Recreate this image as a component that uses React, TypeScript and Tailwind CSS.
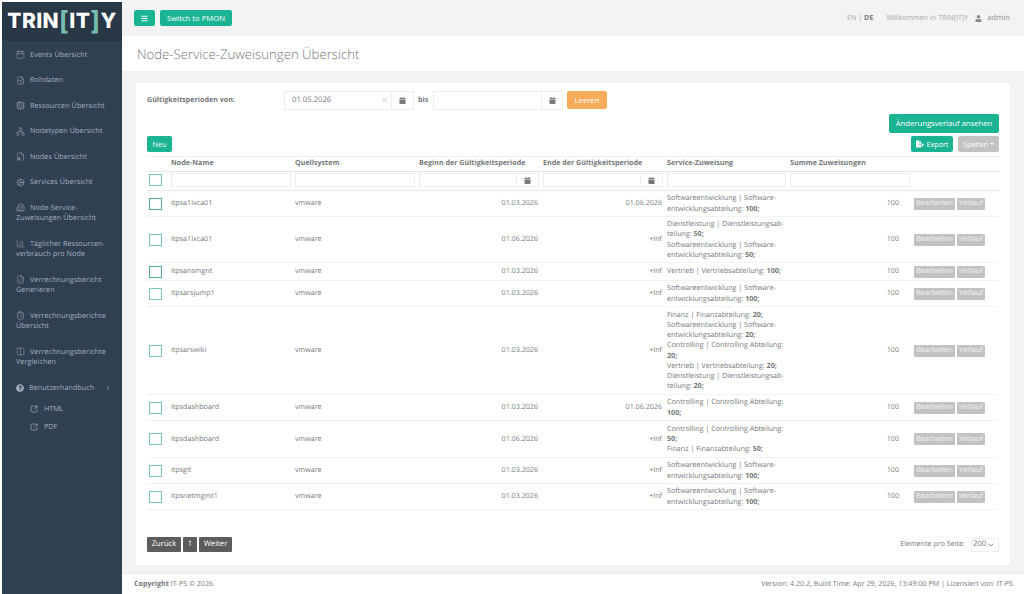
import React from 'react';
import {
  Calendar, FileImage, Cpu, Network, FileCog, Cog, Building2, ChartColumn, FileSpreadsheet, ClipboardList, Columns2,
  SquareArrowOutUpRight, ChevronLeft, ChevronDown, X,
} from 'lucide-react';
import { FaBars, FaCalendar, FaFileExport, FaQuestionCircle, FaUser } from 'react-icons/fa';

const menu = [
  { icon: Calendar, lines: ['Events Übersicht'], h: 'h-[26px]' },
  { icon: FileImage, lines: ['Rohdaten'], h: 'h-[25px]' },
  { icon: Cpu, lines: ['Ressourcen Übersicht'], h: 'h-[26px]' },
  { icon: Network, lines: ['Nodetypen Übersicht'], h: 'h-[25px]' },
  { icon: FileCog, lines: ['Nodes Übersicht'], h: 'h-[26px]' },
  { icon: Cog, lines: ['Services Übersicht'], h: 'h-[25px]' },
  { icon: Building2, lines: ['Node-Service-', 'Zuweisungen Übersicht'], h: 'h-[36px]' },
  { icon: ChartColumn, lines: ['Täglicher Ressourcen-', 'verbrauch pro Node'], h: 'h-[36px]' },
  { icon: FileSpreadsheet, lines: ['Verrechnungsbericht', 'Generieren'], h: 'h-[36px]' },
  { icon: ClipboardList, lines: ['Verrechnungsberichte', 'Übersicht'], h: 'h-[36px]' },
  { icon: Columns2, lines: ['Verrechnungsberichte', 'Vergleichen'], h: 'h-[36px]' },
];

const rows = [
  { name: 'itpsa1lxca01', begin: '01.03.2026', end: '01.06.2026', lines: [['Softwareentwicklung | Software-', ''], ['entwicklungsabteilung: ', '100;']], h: 'h-[26px]', dark: true },
  { name: 'itpsa1lxca01', begin: '01.06.2026', end: '+Inf', lines: [['Dienstleistung | Dienstleistungsab-', ''], ['teilung: ', '50;'], ['Softwareentwicklung | Software-', ''], ['entwicklungsabteilung: ', '50;']], h: 'h-[46px]' },
  { name: 'itpsansmgnt', begin: '01.03.2026', end: '+Inf', lines: [['Vertrieb | Vertriebsabteilung: ', '100;']], h: 'h-[18px]', dark: true },
  { name: 'itpsarsjump1', begin: '01.03.2026', end: '+Inf', lines: [['Softwareentwicklung | Software-', ''], ['entwicklungsabteilung: ', '100;']], h: 'h-[26px]' },
  { name: 'itpsarswiki', begin: '01.03.2026', end: '+Inf', lines: [['Finanz | Finanzabteilung: ', '20;'], ['Softwareentwicklung | Software-', ''], ['entwicklungsabteilung: ', '20;'], ['Controlling | Controlling Abteilung:', ''], ['', '20;'], ['Vertrieb | Vertriebsabteilung: ', '20;'], ['Dienstleistung | Dienstleistungsab-', ''], ['teilung: ', '20;']], h: 'h-[88px]' },
  { name: 'itpsdashboard', begin: '01.03.2026', end: '01.06.2026', lines: [['Controlling | Controlling Abteilung:', ''], ['', '100;']], h: 'h-[26px]' },
  { name: 'itpsdashboard', begin: '01.06.2026', end: '+Inf', lines: [['Controlling | Controlling Abteilung:', ''], ['', '50;'], ['Finanz | Finanzabteilung: ', '50;']], h: 'h-[37px]' },
  { name: 'itpsgit', begin: '01.03.2026', end: '+Inf', lines: [['Softwareentwicklung | Software-', ''], ['entwicklungsabteilung: ', '100;']], h: 'h-[26px]' },
  { name: 'itpsnetmgmt1', begin: '01.03.2026', end: '+Inf', lines: [['Softwareentwicklung | Software-', ''], ['entwicklungsabteilung: ', '100;']], h: 'h-[26px]' },
];

function Check({ dark }: { dark?: boolean }) {
  return <div className={`w-[13px] h-[12px] border-[1.5px] bg-white ${dark ? 'border-[#4fae9a]' : 'border-[#7cc7b8]'}`} />;
}

function CalendarAddon({ w }: { w: string }) {
  return (
    <div className={`${w} shrink-0 flex items-center justify-center border-l border-[#eeeeee] text-[#777a7c]`}>
      <FaCalendar size={7} />
    </div>
  );
}

export default function App() {
  return (
    <div className="flex h-[594px] w-[1024px] overflow-hidden bg-white font-['Open_Sans',sans-serif] text-[7.15px] leading-[10.2px] text-[#75787a] antialiased [text-rendering:geometricPrecision]">
      <aside className="mt-[2px] ml-[2px] w-[120px] shrink-0 bg-[#2f4050] text-[#a7b1c2]">
        <div className="flex h-[39px] items-center justify-center bg-[#293846] font-['Inter',sans-serif] text-[21px] font-extrabold leading-none tracking-[0.4px] text-white">
          TRIN<span className="text-[26px] font-bold text-[#76bdb0]">[</span>IT<span className="text-[26px] font-bold text-[#76bdb0]">]</span>Y
        </div>
        <nav className="pt-[1px]">
          {menu.map((m) => (
            <div key={m.lines[0]} className={`${m.h} flex flex-col justify-center pl-[14px] tracking-[0.1px]`}>
              <div className="flex items-center">
                <m.icon size={9} strokeWidth={1.2} className="mr-[5px] shrink-0" />
                <span className="whitespace-nowrap">{m.lines[0]}</span>
              </div>
              {m.lines[1] && <div className="whitespace-nowrap">{m.lines[1]}</div>}
            </div>
          ))}
          <div className="mt-[4px] flex h-[18px] items-center pl-[14px] pr-[10px] tracking-[0.1px]">
            <FaQuestionCircle size={8} className="mr-[5px]" />
            <span>Benutzerhandbuch</span>
            <ChevronLeft size={8} className="ml-auto" />
          </div>
          <div className="mt-[3px] flex h-[18px] items-center pl-[28px]">
            <SquareArrowOutUpRight size={8} className="mr-[6px]" />
            HTML
          </div>
          <div className="flex h-[18px] items-center pl-[28px]">
            <SquareArrowOutUpRight size={8} className="mr-[6px]" />
            PDF
          </div>
        </nav>
      </aside>

      <main className="flex min-w-0 flex-1 flex-col">
        <header className="flex h-[36px] shrink-0 items-center bg-[#f3f3f4] pl-[12px] pr-[14px]">
          <button className="flex h-[16px] w-[21px] items-center justify-center rounded-[2px] bg-[#1ab394] text-white">
            <FaBars size={7} />
          </button>
          <button className="ml-[5px] h-[16px] w-[72px] rounded-[2px] bg-[#1ab394] text-[7.7px] text-white">Switch to PMON</button>
          <div className="ml-auto flex items-center pt-[1px] text-[#a5a8aa]">
            <span>EN | <b className="text-[#75787a]">DE</b></span>
            <span className="ml-[13px]">Willkommen in TRIN[IT]Y</span>
            <FaUser size={7} className="ml-[7px] text-[#888]" />
            <span className="ml-[5px] text-[7.7px] text-[#8a8d8f]">admin</span>
          </div>
        </header>

        <div className="flex h-[35px] shrink-0 items-center bg-white pl-[15px] pt-[1px] text-[13.2px] font-light">
          Node-Service-Zuweisungen Übersicht
        </div>

        <div className="flex-1 bg-[#f3f3f4] px-[14px] pt-[12px]">
          <section className="flex h-[482px] flex-col bg-white px-[11px] pt-[7px]">
            <div className="flex h-[20px] items-center">
              <b className="w-[137px] pt-[1px]">Gültigkeitsperioden von:</b>
              <div className="flex h-[19px] w-[130px] border border-[#eeeeee]">
                <div className="flex flex-1 items-center justify-between pl-[7px] pr-[3px] pt-[1px] text-[7.7px]">
                  01.05.2026
                  <X size={7} className="text-[#aaa]" />
                </div>
                <CalendarAddon w="w-[22px]" />
              </div>
              <b className="ml-[4px] w-[15px] pt-[1px]">bis</b>
              <div className="flex h-[19px] w-[130px] border border-[#eeeeee]">
                <div className="flex-1" />
                <CalendarAddon w="w-[21px]" />
              </div>
              <button className="ml-[4px] h-[18px] w-[40px] rounded-[2px] bg-[#f8ac59] text-[7.7px] text-white">Leeren</button>
            </div>

            <div className="mt-[4px] flex justify-end">
              <button className="h-[19px] w-[110px] rounded-[2px] bg-[#1ab394] text-[7.7px] text-white">Änderungsverlauf ansehen</button>
            </div>

            <div className="mt-[3px] flex h-[16px] items-center">
              <button className="h-[16px] w-[25px] rounded-[2px] bg-[#1ab394] text-white">Neu</button>
              <button className="ml-auto flex h-[16px] w-[42px] items-center justify-center gap-[3px] rounded-[2px] bg-[#1ab394] text-white">
                <FaFileExport size={8} />
                Export
              </button>
              <button className="ml-[5px] flex h-[16px] w-[41px] items-center justify-center gap-[2px] rounded-[2px] bg-[#c2c2c2] text-white">
                Spalten
                <span className="border-x-[2px] border-t-[2.5px] border-x-transparent border-t-white" />
              </button>
            </div>

            <table className="mt-[4px] w-[852px] table-fixed border-t border-[#f0f0f0]">
              <colgroup>
                <col className="w-[22px]" />
                <col className="w-[124px]" />
                <col className="w-[124px]" />
                <col className="w-[124px]" />
                <col className="w-[124px]" />
                <col className="w-[123px]" />
                <col className="w-[124px]" />
                <col className="w-[87px]" />
              </colgroup>
              <thead>
                <tr className="h-[15px] border-b-[1.5px] border-[#e7e7e7] text-left font-bold">
                  <th />
                  {['Node-Name', 'Quellsystem', 'Beginn der Gültigkeitsperiode', 'Ende der Gültigkeitsperiode', 'Service-Zuweisung', 'Summe Zuweisungen'].map((t) => (
                    <th key={t} className="whitespace-nowrap px-[2px] pb-[2px] font-bold">{t}</th>
                  ))}
                  <th />
                </tr>
                <tr className="h-[19px] border-b-[1.5px] border-[#e7e7e7]">
                  <td className="pb-[2px] pl-[2px]"><Check /></td>
                  {[false, false, true, true, false, false].map((cal, i) => (
                    <td key={i} className="px-[2px] pb-[2px]">
                      <div className="flex h-[14px] border border-[#eeeeee]">
                        <div className="flex-1" />
                        {cal && <CalendarAddon w="w-[22px]" />}
                      </div>
                    </td>
                  ))}
                  <td />
                </tr>
              </thead>
              <tbody>
                {rows.map((r, i) => (
                  <tr key={i} className={`${r.h} border-b border-[#f3f3f3]`}>
                    <td className="pl-[2px]"><Check dark={r.dark} /></td>
                    <td className="px-[2px]">{r.name}</td>
                    <td className="px-[2px]">vmware</td>
                    <td className="pl-[2px] pr-[3px] text-right">{r.begin}</td>
                    <td className="pl-[2px] pr-[3px] text-right">{r.end}</td>
                    <td className="whitespace-nowrap px-[2px]">
                      {r.lines.map((l, j) => (
                        <div key={j}>{l[0]}{l[1] && <b>{l[1]}</b>}</div>
                      ))}
                    </td>
                    <td className="pr-[13px] text-right">100</td>
                    <td className="pl-[2px]">
                      <div className="flex gap-[2px]">
                        <span className="flex h-[12px] w-[41px] items-center justify-center rounded-[1px] bg-[#c2c2c2] text-white/80">Bearbeiten</span>
                        <span className="flex h-[12px] w-[28px] items-center justify-center rounded-[1px] bg-[#c2c2c2] text-white/80">Verlauf</span>
                      </div>
                    </td>
                  </tr>
                ))}
              </tbody>
            </table>

            <div className="mt-[27px] flex items-center">
              <div className="flex gap-[2px] text-[7.7px] text-white">
                <span className="flex h-[15px] w-[34px] items-center justify-center rounded-[1px] bg-[#5c5c5c]">Zurück</span>
                <span className="flex h-[15px] w-[14px] items-center justify-center rounded-[1px] bg-[#5c5c5c]">1</span>
                <span className="flex h-[15px] w-[33px] items-center justify-center rounded-[1px] bg-[#5c5c5c]">Weiter</span>
              </div>
              <span className="ml-auto">Elemente pro Seite:</span>
              <div className="ml-[6px] flex h-[14px] w-[28px] items-center justify-between border border-[#eeeeee] pl-[1px] pr-[3px] text-[7.7px]">
                200
                <ChevronDown size={8} strokeWidth={2.5} />
              </div>
            </div>
          </section>
        </div>

        <footer className="flex h-[21px] shrink-0 items-center justify-between border-t border-[#e7eaec] bg-white pl-[12px] pr-[11px] pt-[1px]">
          <span><b>Copyright</b> IT-PS © 2026</span>
          <span>Version: 4.20.2, Build Time: Apr 29, 2026, 13:49:00 PM | Lizensiert von: IT-PS</span>
        </footer>
      </main>
    </div>
  );
}
